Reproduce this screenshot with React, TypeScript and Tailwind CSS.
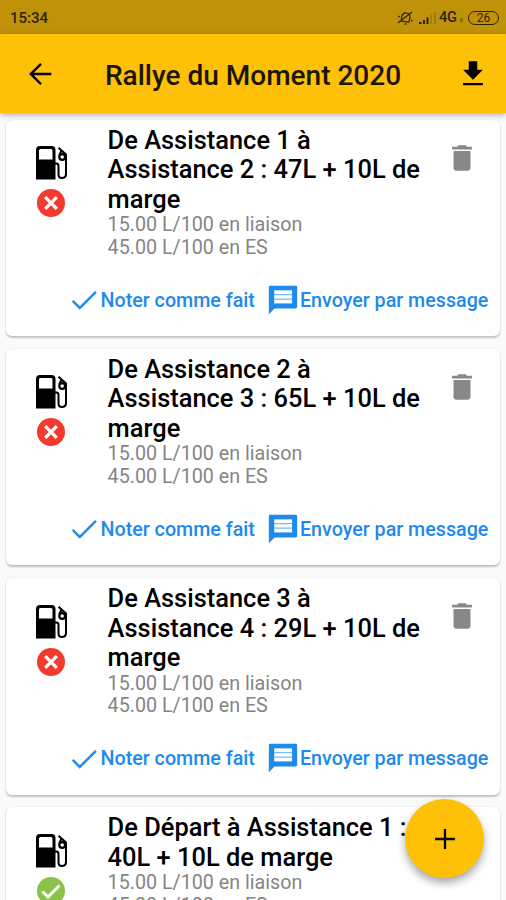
const ICONS = {
  back: 'M20 11.150H7.600l5.700-5.700L12.150 4.150l-7.900 7.850 7.900 7.850 1.150-1.150L7.600 12.850H20v-1.700z',
  download: 'M19 9h-4V3H9v6H5l7 7 7-7zM5 18.300v1.700h14v-1.700H5z',
  trash: 'M6 19c0 1.1.9 2 2 2h8c1.1 0 2-.9 2-2V7H6v12zM19 4h-3.5l-1-1h-5l-1 1H5v2h14V4z',
  check: 'M9 16.400L4.600 12l-1.190 1.200L9 18.800 21 6.800l-1.200-1.200z',
  message:
    'M21 2H3Q2 2 2 3V22l4-4H21Q22 18 22 17V3Q22 2 21 2z',
  add: 'M19 12.800h-6.200v6.200h-1.600v-6.200H5v-1.600h6.200V5h1.600v6.200H19v1.600z',
};

function Icon({ name, className }: { name: keyof typeof ICONS; className: string }) {
  return (
    <svg viewBox="0 0 24 24" fill="currentColor" className={`shrink-0 ${className}`}>
      <path d={ICONS[name]} />
      {name === 'message' && <path d="M5.800 5.200h12.600v9.200H5.800z" fill="#fff" />}
      {name === 'message' && <path d="M5.800 7.800h12.600v.8H5.800zM5.800 11h12.600v.8H5.800z" opacity=".6" />}
    </svg>
  );
}

function Pump() {
  return (
    <svg viewBox="0 0 32 34" className="h-[34px] w-8" fill="none" stroke="#000">
      <path d="M0 33.5V4Q0 0 4 0H15.500Q19.500 0 19.500 4V33.500ZM3 13.500H16.500V4.500Q16.500 3 15 3H4.500Q3 3 3 4.500Z" fill="#000" stroke="none" fillRule="evenodd" />
      <path d="M19 17.500H20.500Q22.500 17.500 22.500 20V28.500Q22.500 32 26 32T30 28.500V8.500L22.500 1.800" strokeWidth="2" />
      <circle cx="26.200" cy="11" r="2.900" strokeWidth="2.200" />
      <path d="M25.500 4.500L23.200 9.500" strokeWidth="2" />
    </svg>
  );
}

function Status({ done }: { done: boolean }) {
  return (
    <svg viewBox="0 0 28 28" className="ml-px h-7 w-7" fill="none">
      <circle cx="14" cy="14" r="14" fill={done ? '#8bc34a' : '#f23a2f'} />
      {done ? (
        <path d="M5.500 14.500L11 20L22.500 8.500" stroke="#fff" strokeWidth="3" />
      ) : (
        <path d="M8.200 8.200L19.800 19.800M19.800 8.200L8.200 19.800" stroke="#fff" strokeWidth="3.200" />
      )}
    </svg>
  );
}

function FuelCard({ lines, done = false }: { lines: string[]; done?: boolean }) {
  return (
    <article className="flex h-[216.500px] shrink-0 flex-col rounded-[6px] bg-white shadow-[0_1.500px_2px_rgba(0,0,0,0.22),0_0_2px_rgba(0,0,0,0.06)]">
      <div className="flex h-[153px] pt-[6px]">
        <div className="flex w-[102px] flex-col gap-[9px] pt-[20.500px] pl-[30px]">
          <Pump />
          <Status done={done} />
        </div>
        <div className="flex-1 whitespace-nowrap">
          <h2 className="text-[25.450px] leading-[29.5px] font-medium text-black">
            {lines.map((line) => (
              <span key={line} className="block">{line}</span>
            ))}
          </h2>
          <p className="text-[19.7px] leading-[22.7px] text-[#858585]">
            15.00 L/100 en liaison
            <br />
            45.00 L/100 en ES
          </p>
        </div>
        <Icon name="trash" className="mt-[15px] mr-[21px] h-[34px] w-[34px] text-[#888888]" />
      </div>
      <div className="flex h-14 items-center justify-end pr-3 text-[19.7px] font-medium whitespace-nowrap text-[#1e8aee]">
        <Icon name="check" className="mb-px h-[34px] w-[34px]" />
        <span>Noter comme fait</span>
        <Icon name="message" className="mb-[2px] ml-[11px] h-[34px] w-[34px]" />
        <span>Envoyer par message</span>
      </div>
    </article>
  );
}

function StatusBar() {
  return (
    <div className="flex h-[34px] shrink-0 items-center bg-[#bf920a] pt-px pr-[7px] pl-[10px] text-[#2b2106]">
      <span className="mt-px text-[15px] font-medium">15:34</span>
      <svg viewBox="0 0 16 16" className="ml-auto h-4 w-4" fill="none" stroke="currentColor" strokeWidth="1.200">
        <path d="M4 11L5 6Q6 2.500 9.500 3T13 7L12 12ZM7 14H10M1 13L15 2M1 6L3 7M14 10L15.500 11" />
      </svg>
      <svg viewBox="0 0 18 12" className="mt-px ml-[6px] h-3 w-[18px]" fill="currentColor">
        <path d="M0 12V10H2.500V12ZM4 12V8H6V12ZM7.500 12V5.500H9.500V12Z" />
        <path d="M11.500 12V2.500H13V12ZM15 12V0H17V12Z" opacity=".2" />
      </svg>
      <span className="ml-[2px] text-[14.500px] font-medium">4G</span>
      <span className="mt-1 ml-[3px] h-1 w-[3px] bg-[#2b2106] opacity-30" />
      <span className="ml-[5px] flex h-[14px] w-[31px] items-center justify-center rounded-full border border-[#2b2106] text-[12px]">26</span>
    </div>
  );
}

export default function App() {
  return (
    <div className="relative flex h-[900px] w-[506px] flex-col overflow-hidden bg-[#fafafa] font-[Roboto,sans-serif]">
      <StatusBar />
      <header className="z-10 flex h-[79px] shrink-0 items-center bg-[#ffc107] pr-4 pl-[23px] text-black shadow-[0_2px_6px_rgba(0,0,0,0.3)]">
        <Icon name="back" className="h-[34px] w-[34px]" />
        <h1 className="mt-[4px] ml-12 flex-1 text-[28px] leading-8 font-medium whitespace-nowrap text-[#1c1600]">Rallye du Moment 2020</h1>
        <Icon name="download" className="h-[34px] w-[34px]" />
      </header>
      <main className="flex flex-col gap-[12.800px] px-[5.600px] pt-[6.500px]">
        <FuelCard lines={['De Assistance 1 à', 'Assistance 2 : 47L + 10L de', 'marge']} />
        <FuelCard lines={['De Assistance 2 à', 'Assistance 3 : 65L + 10L de', 'marge']} />
        <FuelCard lines={['De Assistance 3 à', 'Assistance 4 : 29L + 10L de', 'marge']} />
        <FuelCard lines={['De Départ à Assistance 1 :', '40L + 10L de marge']} done />
      </main>
      <button className="absolute right-[22px] bottom-[22px] flex h-[79px] w-[79px] items-center justify-center rounded-full bg-[#ffc107] text-black shadow-[0_5px_9px_rgba(0,0,0,0.35)]">
        <Icon name="add" className="h-[34px] w-[34px]" />
      </button>
    </div>
  );
}
